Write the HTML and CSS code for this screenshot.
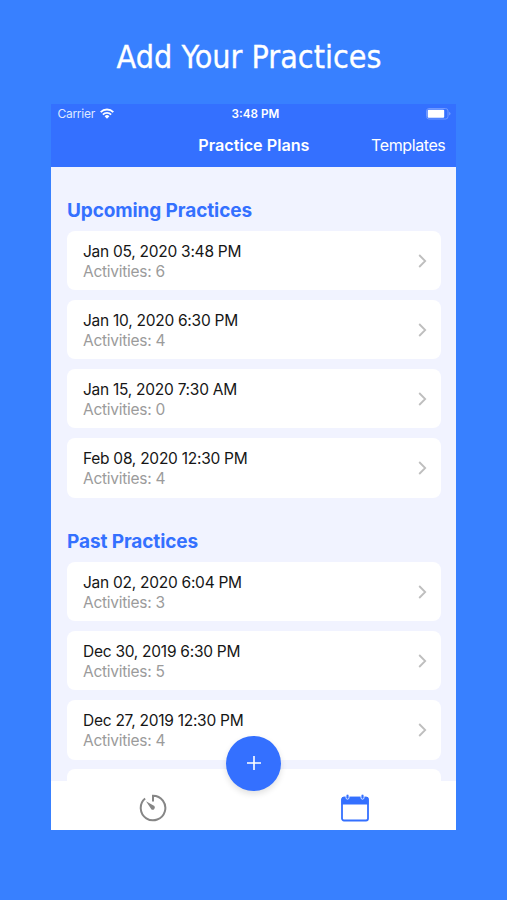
FILE: index.html
```html
<!DOCTYPE html>
<html lang="en">
<head>
  <meta charset="UTF-8" />
  <meta name="viewport" content="width=device-width, initial-scale=1.0"/>
  <title>Practice Plans</title>
  <link rel="stylesheet" href="styles.css">
</head>
<body>
  <h1 class="promo-title">Add Your Practices</h1>

  <div class="phone">
    <header class="header">
      <div class="status-bar">
        <div class="carrier">
          <span>Carrier</span>
          <svg width="14" height="11" viewBox="0 0 14 11" fill="none" stroke="#fff" stroke-width="1.9">
            <path d="M0.7 4.1a8.9 8.9 0 0 1 12.6 0"/>
            <path d="M2.9 6.6a5.8 5.8 0 0 1 8.2 0"/>
            <path d="M4.6 8.2a3.4 3.4 0 0 1 4.8 0L7 10.7z" fill="#fff" stroke="none"/>
          </svg>
        </div>
        <span class="clock">3:48 PM</span>
        <svg class="battery" width="26" height="12" viewBox="0 0 26 12">
          <rect x="0.5" y="0.5" width="21.5" height="10.5" rx="2.5" fill="none" stroke="#6f98ff"/>
          <rect x="1.7" y="1.8" width="16.5" height="8" rx="1" fill="#fff"/>
          <path d="M23.3 3.8q2.4 1.9 0 3.8z" fill="#86a9ff"/>
        </svg>
      </div>
      <div class="nav-bar">
        <span class="nav-title">Practice Plans</span>
        <a class="nav-link">Templates</a>
      </div>
    </header>

    <main class="content">
      <section class="group">
        <h2>Upcoming Practices</h2>
        <div class="card">
          <div class="info">
            <p class="date">Jan 05, 2020 3:48 PM</p>
            <p class="activities">Activities: 6</p>
          </div>
          <svg class="chevron" viewBox="0 0 9 14"><path d="M1.2 1l6 6-6 6"/></svg>
        </div>
        <div class="card">
          <div class="info">
            <p class="date">Jan 10, 2020 6:30 PM</p>
            <p class="activities">Activities: 4</p>
          </div>
          <svg class="chevron" viewBox="0 0 9 14"><path d="M1.2 1l6 6-6 6"/></svg>
        </div>
        <div class="card">
          <div class="info">
            <p class="date">Jan 15, 2020 7:30 AM</p>
            <p class="activities">Activities: 0</p>
          </div>
          <svg class="chevron" viewBox="0 0 9 14"><path d="M1.2 1l6 6-6 6"/></svg>
        </div>
        <div class="card">
          <div class="info">
            <p class="date">Feb 08, 2020 12:30 PM</p>
            <p class="activities">Activities: 4</p>
          </div>
          <svg class="chevron" viewBox="0 0 9 14"><path d="M1.2 1l6 6-6 6"/></svg>
        </div>
      </section>

      <section class="group">
        <h2>Past Practices</h2>
        <div class="card">
          <div class="info">
            <p class="date">Jan 02, 2020 6:04 PM</p>
            <p class="activities">Activities: 3</p>
          </div>
          <svg class="chevron" viewBox="0 0 9 14"><path d="M1.2 1l6 6-6 6"/></svg>
        </div>
        <div class="card">
          <div class="info">
            <p class="date">Dec 30, 2019 6:30 PM</p>
            <p class="activities">Activities: 5</p>
          </div>
          <svg class="chevron" viewBox="0 0 9 14"><path d="M1.2 1l6 6-6 6"/></svg>
        </div>
        <div class="card">
          <div class="info">
            <p class="date">Dec 27, 2019 12:30 PM</p>
            <p class="activities">Activities: 4</p>
          </div>
          <svg class="chevron" viewBox="0 0 9 14"><path d="M1.2 1l6 6-6 6"/></svg>
        </div>
        <div class="card"></div>
      </section>
    </main>

    <nav class="tab-bar">
      <a class="tab">
        <!-- timer -->
        <svg width="28" height="28" viewBox="0 0 28 28">
          <path d="M6.1 4.6A12.3 12.3 0 1 0 14 1.7V7.5" fill="none" stroke="#868686" stroke-width="2"/>
          <path d="M7 7.2l8.4 4.9a2.3 2.3 0 0 1-2.9 3.4z" fill="#868686"/>
        </svg>
      </a>
      <a class="tab">
        <!-- calendar -->
        <svg width="28" height="28" viewBox="0 0 28 28">
          <rect x="1" y="3.7" width="26" height="22.8" rx="2" fill="#fff" stroke="#3470ff" stroke-width="1.8"/>
          <path d="M0.5 10.4V5a2.2 2.2 0 0 1 2.2-2.2h22.6A2.2 2.2 0 0 1 27.5 5v5.4z" fill="#3470ff"/>
          <g fill="#3470ff" stroke="#fff" stroke-width="0.8">
            <rect x="5" y="0.2" width="3" height="5" rx="1.5"/>
            <rect x="20" y="0.2" width="3" height="5" rx="1.5"/>
          </g>
        </svg>
      </a>
    </nav>

    <button class="add-btn" aria-label="Add practice">
      <svg width="14" height="14" viewBox="0 0 14 14" stroke="#fff" stroke-width="1.6"><path d="M7 0v14M0 7h14"/></svg>
    </button>
  </div>
</body>
</html>
```
FILE: styles.css
```css
:root {
  --page-color: #3880ff;
  --primary-color: #3470ff;
  --bg-color: #f1f3ff;
  --muted-color: #9b9b9b;
}
* {
  box-sizing: border-box;
}
body {
  margin: 0;
  height: 900px;
  overflow: hidden;
  background-color: var(--page-color);
  font-family: Inter, "Liberation Sans", sans-serif;
}
h1, h2, p {
  margin: 0;
}
.promo-title {
  height: 104px;
  padding: 37px 9px 0 0;
  text-align: center;
  color: white;
  font-family: "DejaVu Sans Condensed", "DejaVu Sans", sans-serif;
  font-stretch: condensed;
  font-size: 32px;
  line-height: 40px;
  font-weight: normal;
  -webkit-text-stroke: 0.3px white;
}
.phone {
  position: relative;
  display: flex;
  flex-direction: column;
  width: 405px;
  height: 726px;
  margin-left: 51.4px;
  background-color: var(--bg-color);
}
.header {
  flex: none;
  height: 62.5px;
  background-color: var(--primary-color);
  color: white;
}
.status-bar, .nav-bar {
  display: grid;
  grid-template-columns: 1fr auto 1fr;
  align-items: center;
}
.status-bar {
  height: 19px;
  padding: 0 4px 0 6px;
  font-size: 12px;
}
.carrier {
  display: flex;
  align-items: center;
  gap: 5.5px;
  color: #dfe8ff;
  letter-spacing: -0.25px;
}
.clock {
  padding-left: 1px;
  font-size: 11.7px;
  font-weight: 600;
}
.battery {
  justify-self: end;
}
.nav-bar {
  height: 43px;
  padding: 0 11px;
}
.nav-title {
  grid-column: 2;
  font-size: 16.2px;
  font-weight: 600;
}
.nav-link {
  justify-self: end;
  font-size: 16px;
  letter-spacing: -0.4px;
}
.content {
  flex: 1;
  min-height: 0;
  overflow: hidden;
  padding: 30px 15.5px 0 15.6px;
}
.group {
  margin-bottom: 30px;
}
.group h2 {
  height: 34.5px;
  color: var(--primary-color);
  font-size: 19px;
  line-height: 28px;
  font-weight: 700;
  letter-spacing: -0.1px;
}
.card {
  display: flex;
  align-items: center;
  justify-content: space-between;
  height: 59.3px;
  margin-bottom: 9.8px;
  padding: 0 14px 0 16px;
  background-color: white;
  border-radius: 8px;
}
.info {
  padding-top: 2px;
  font-size: 15.5px;
  line-height: 20px;
  letter-spacing: -0.26px;
}
.date {
  color: #161616;
}
.activities {
  color: var(--muted-color);
}
.chevron {
  width: 9px;
  height: 14px;
  fill: none;
  stroke: #bebebe;
  stroke-width: 1.8;
}
.tab-bar {
  flex: none;
  display: flex;
  height: 49.5px;
  background-color: white;
}
.tab {
  flex: 1;
  display: flex;
  justify-content: center;
  padding-top: 13px;
}
.add-btn {
  position: absolute;
  left: 175px;
  top: 631.5px;
  display: flex;
  align-items: center;
  justify-content: center;
  width: 55px;
  height: 55px;
  padding: 0;
  border: none;
  border-radius: 50%;
  background-color: var(--primary-color);
  box-shadow: 0 3px 6px rgba(0,0,0,0.12);
}
```
